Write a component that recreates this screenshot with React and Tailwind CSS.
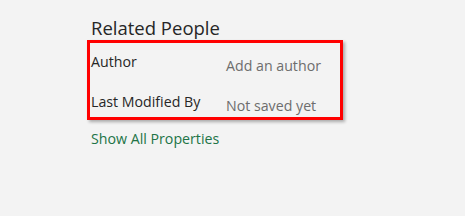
export default function App() {
  return (
    <div className="w-[465px] h-[216px] bg-[#f3f3f3] font-['Open_Sans',sans-serif] pl-[91px] pt-[16px]">
      <h2 className="text-[18.5px] leading-[24px] text-[#262626]">Related People</h2>
      <div className="ml-[-4px] w-[256px] h-[80px] border-[3px] border-[#ff0000] shadow-[2px_2px_3px_rgba(0,0,0,0.3)] pl-[1px] pt-[9px]">
        <div className="flex text-[14.2px] leading-[19px]">
          <span className="w-[135px] text-[#262626]">Author</span>
          <span className="text-[#6d6d6d] mt-[4px]">Add an author</span>
        </div>
        <div className="flex text-[14.2px] leading-[19px] mt-[17px]">
          <span className="w-[135px] text-[#262626]">Last Modified By</span>
          <span className="text-[#6d6d6d] mt-[4px]">Not saved yet</span>
        </div>
      </div>
      <div className="mt-[9px] text-[14.2px] leading-[19px] text-[#217346]">Show All Properties</div>
    </div>
  );
}
